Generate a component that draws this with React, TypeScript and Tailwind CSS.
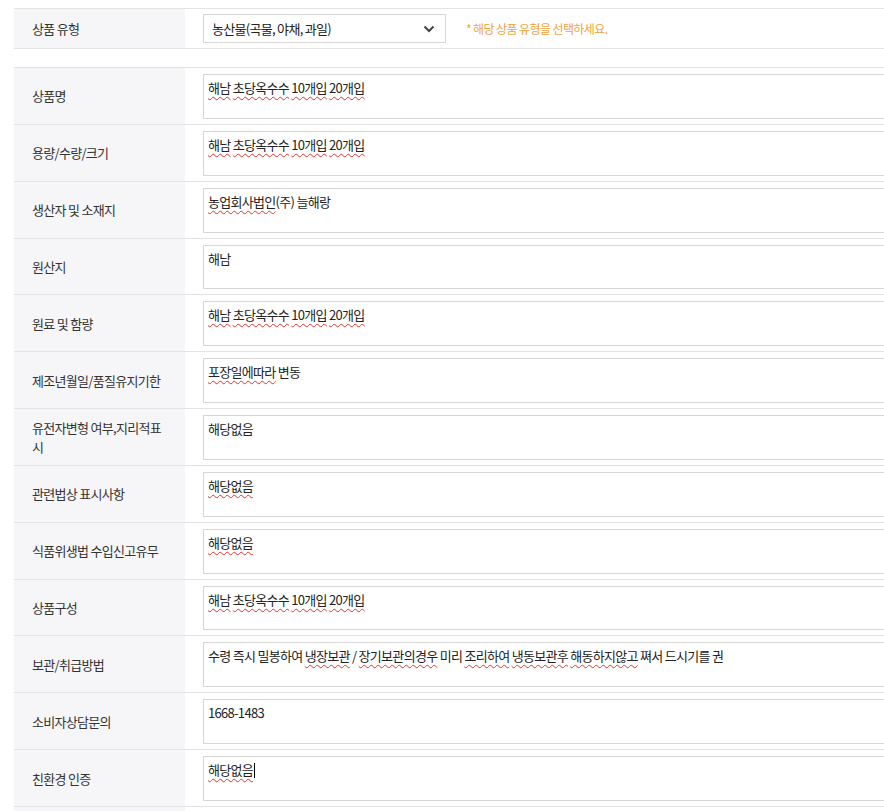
import type { ReactNode } from 'react'

type Seg = { t: string; typo?: boolean }

interface InfoRow {
    label: string
    value: Seg[]
    caret?: boolean
}

const FONT = "font-['Malgun_Gothic','Noto_Sans_CJK_KR',sans-serif]"

const corn: Seg[] = [
    { t: '해남', typo: true }, { t: ' ' },
    { t: '초당옥수수', typo: true }, { t: ' ' },
    { t: '10개입', typo: true }, { t: ' ' },
    { t: '20개입', typo: true },
]

const ROWS: InfoRow[] = [
    { label: '상품명', value: corn },
    { label: '용량/수량/크기', value: corn },
    { label: '생산자 및 소재지', value: [{ t: '농업회사법인', typo: true }, { t: '(주) 늘해랑' }] },
    { label: '원산지', value: [{ t: '해남' }] },
    { label: '원료 및 함량', value: corn },
    { label: '제조년월일/품질유지기한', value: [{ t: '포장일에따라', typo: true }, { t: ' 변동' }] },
    { label: '유전자변형 여부,지리적표시', value: [{ t: '해당없음' }] },
    { label: '관련법상 표시사항', value: [{ t: '해당없음', typo: true }] },
    { label: '식품위생법 수입신고유무', value: [{ t: '해당없음', typo: true }] },
    { label: '상품구성', value: corn },
    {
        label: '보관/취급방법',
        value: [
            { t: '수령 즉시 밀봉하여 ' },
            { t: '냉장보관', typo: true },
            { t: ' / ' },
            { t: '장기보관의경우', typo: true },
            { t: ' 미리 ' },
            { t: '조리하여', typo: true },
            { t: ' ' },
            { t: '냉동보관후', typo: true },
            { t: ' ' },
            { t: '해동하지않고', typo: true },
            { t: ' 쪄서 드시기를 권' },
        ],
    },
    { label: '소비자상담문의', value: [{ t: '1668-1483' }] },
    { label: '친환경 인증', value: [{ t: '해당없음', typo: true }], caret: true },
    { label: '', value: [{ t: '' }] },
]

function FakeTextarea({ value, caret }: { value: Seg[]; caret?: boolean }) {
    return (
        <div className="h-[44.85px] w-[760px] border border-[#d6d6d6] bg-white px-[4px] pt-[3px] text-[13px] leading-[20px] tracking-[-0.7px] text-[#222] whitespace-nowrap overflow-hidden">
            {value.map((s, i) =>
                s.typo ? (
                    <span key={i} className="underline decoration-wavy decoration-[#e0342c] decoration-1 underline-offset-[3px]">
                        {s.t}
                    </span>
                ) : (
                    <span key={i}>{s.t}</span>
                )
            )}
            {caret && <span className="ml-[1px] inline-block h-[15px] w-px bg-black align-[-3px]" />}
        </div>
    )
}

function LabelCell({ children }: { children: ReactNode }) {
    return (
        <div className="w-[171px] shrink-0 bg-[#f6f6f8] flex items-center pl-[18px] pr-[14px] text-[13px] leading-[19px] tracking-[-0.7px] text-[#333]">
            {children}
        </div>
    )
}

export default function App() {
    return (
        <div className={`h-[811px] w-[884px] overflow-hidden bg-white ${FONT}`}>
            <div className="w-[1000px] pt-[8px] pl-[14px]">
                {/* Product type */}
                <div className="flex border-y border-[#e3e3e3]">
                    <LabelCell>상품 유형</LabelCell>
                    <div className="flex items-center pl-[18px] py-[5px]">
                        <div className="flex h-[29px] w-[243px] items-center justify-between border border-[#d6d6d6] bg-white pl-[8px] pr-[10px] text-[13px] tracking-[-0.7px] text-[#222]">
                            <span>농산물(곡물, 야채, 과일)</span>
                            <svg width="12" height="8" viewBox="0 0 12 8" fill="none">
                                <polyline points="1.5,1.5 6,6 10.5,1.5" stroke="#444" strokeWidth="2" />
                            </svg>
                        </div>
                        <span className="ml-[20px] text-[12px] tracking-[-0.6px] text-[#f2a23a]">* 해당 상품 유형을 선택하세요.</span>
                    </div>
                </div>

                {/* Info notice rows */}
                <div className="mt-[18px] border-t border-[#e3e3e3]">
                    {ROWS.map((row, i) => (
                        <div key={i} className="flex border-b border-[#e3e3e3]">
                            <LabelCell>{row.label}</LabelCell>
                            <div className="pl-[18px] pt-[6px] pb-[5px]">
                                <FakeTextarea value={row.value} caret={row.caret} />
                            </div>
                        </div>
                    ))}
                </div>
            </div>
        </div>
    )
}
